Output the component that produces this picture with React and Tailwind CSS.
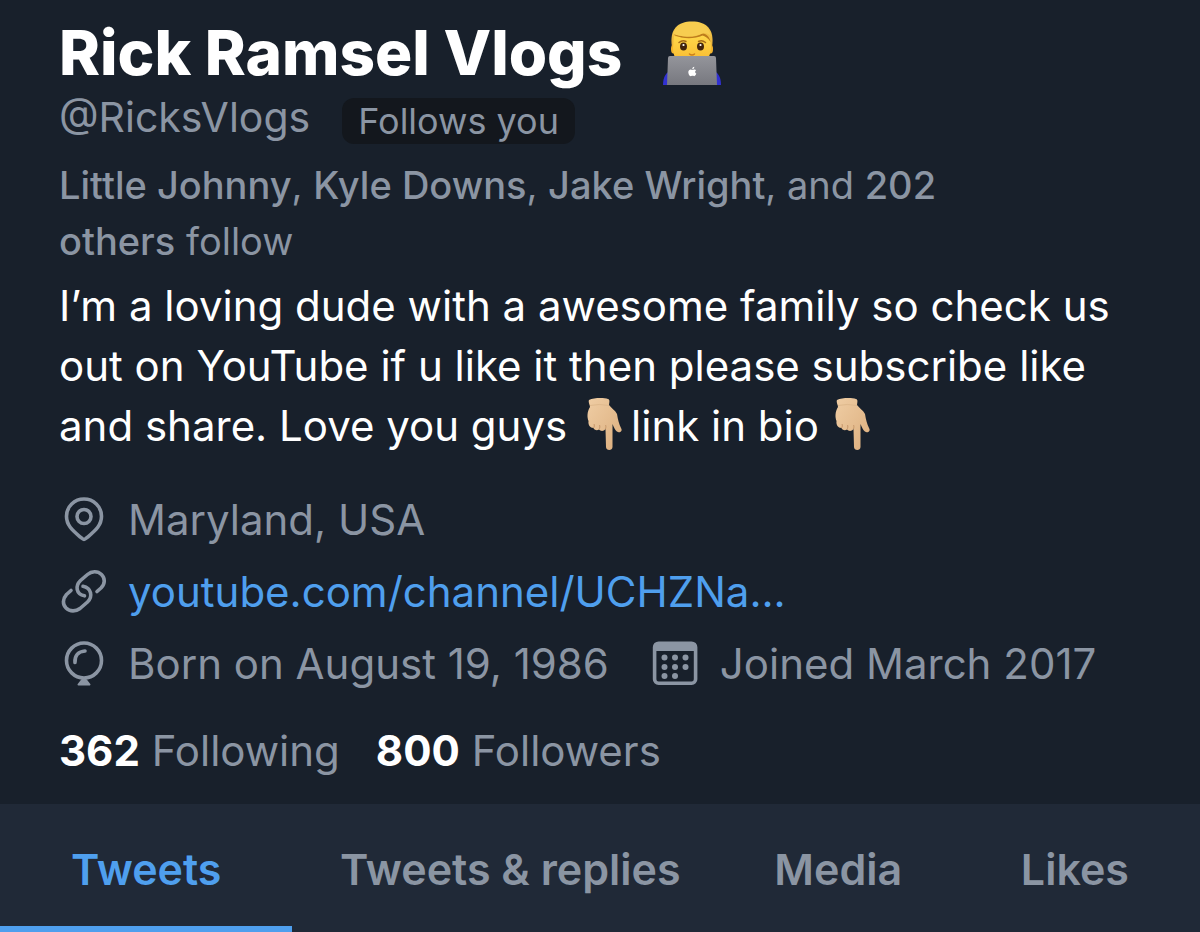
import clsx from 'clsx'

const followers = ['Little Johnny', 'Kyle Downs', 'Jake Wright']

const tabs = [
  { id: 'tweets', label: 'Tweets', edge: true },
  { id: 'replies', label: 'Tweets & replies', edge: false },
  { id: 'media', label: 'Media', edge: false },
  { id: 'likes', label: 'Likes', edge: true },
]

function Technologist() {
  return (
    <svg viewBox="0 0 58 66" className="h-[66px] w-[58px] shrink-0" role="img" aria-label="Man technologist">
      <defs>
        <linearGradient id="skin" x1="0" y1="0" x2="0" y2="1">
          <stop offset="0" stopColor="#ffd84a" />
          <stop offset="1" stopColor="#f7b52c" />
        </linearGradient>
        <linearGradient id="hair" x1="0" y1="0" x2="0" y2="1">
          <stop offset="0" stopColor="#f9d050" />
          <stop offset="1" stopColor="#e3a632" />
        </linearGradient>
        <linearGradient id="laptop" x1="0" y1="0" x2="0" y2="1">
          <stop offset="0" stopColor="#94959b" />
          <stop offset="1" stopColor="#77787f" />
        </linearGradient>
      </defs>
      <path d="M0 65C0 57 3 52 9 50H49C55 52 58 57 58 65Z" fill="#3131d2" />
      <path d="M9 27C6 9 15 1.500 29 1.500S52 9 49 27L47 34H11Z" fill="url(#hair)" />
      <ellipse cx="10.500" cy="29" rx="2.500" ry="4.500" fill="#f3b32d" />
      <ellipse cx="47.500" cy="29" rx="2.500" ry="4.500" fill="#f3b32d" />
      <path d="M11 16C20 18 35 19 40 15C46 14 48 19 48 27C48 37 42 47 29 47S10 38 10 28Z" fill="url(#skin)" />
      <path d="M10.500 13C17 17.500 32 18.500 39 13.500C43 13 47 17 47.500 22C45 18 42 16 39.500 15.500C30 19.500 19 18.500 12 15.500Z" fill="#bd7d1c" />
      <path d="M10 14C12.500 6 22 3 31 3.500C41 4 47 9 47.500 16C45 13 42 12.500 39.500 13.500C31 17.500 18 17 10 14Z" fill="#f7cd50" />
      <path d="M16 22.500Q19.500 19.500 23 21.500M35.500 21.500Q39 19.500 42.500 22.500" fill="none" stroke="#a56b19" strokeWidth="1.500" strokeLinecap="round" />
      <ellipse cx="20.500" cy="26.500" rx="3.500" ry="3.900" fill="#42240d" />
      <ellipse cx="37.500" cy="26.500" rx="3.500" ry="3.900" fill="#42240d" />
      <circle cx="20.500" cy="25" r="1.100" fill="#fff" />
      <circle cx="37.500" cy="25" r="1.100" fill="#fff" />
      <path d="M26.500 34Q29 36 31.500 34" fill="none" stroke="#cb7e1b" strokeWidth="1.500" strokeLinecap="round" />
      <path d="M7 36H51Q53 36 53 38L54 65H4L5 38Q5 36 7 36Z" fill="url(#laptop)" />
      <path d="M29.300 49.200C29.200 47.900 30.100 46.900 31.300 46.700C31.400 48 30.500 49.100 29.300 49.200ZM29.200 49.900C30 49.900 30.700 49.300 31.500 49.400C32.200 49.400 32.800 49.800 33.100 50.300C31.700 51.200 31.900 53 33.300 53.600C32.900 54.800 32.100 56.200 31.200 56.200C30.500 56.200 30.200 55.800 29.400 55.800C28.500 55.800 28.200 56.200 27.600 56.200C26.400 56.200 25.200 53.800 25.300 52.100C25.400 50.400 26.500 49.400 27.600 49.400C28.300 49.400 28.700 49.900 29.200 49.900Z" fill="#fff" />
    </svg>
  )
}

function PointDown() {
  return (
    <svg viewBox="0 0 36 54" className="h-[54px] w-9" role="img" aria-label="Pointing down">
      <defs>
        <linearGradient id="hand" x1="0" y1="0" x2="1" y2="1">
          <stop offset="0" stopColor="#efcda4" />
          <stop offset="1" stopColor="#dcae7d" />
        </linearGradient>
      </defs>
      <path
        d="M2 3C7 .500 17 .500 21 2C23 2.500 22.500 5 22 8C24 11 28 13 30 17C31 23 32 27 34 31C36 34 33 36 31 35C28 34 27 30 25.500 27V50C25.500 54 19 54 19 50L18.500 32C17 34.500 13.500 34.500 12 32.500C10 34 7 33 6.500 31C3 31 1 28 1.500 24C0 20 0 15 3 10C3 8 1 5 2 3Z"
        fill="url(#hand)"
      />
      <path d="M3 8.500Q12 6.500 22 8.500" fill="none" stroke="#dfb98d" strokeWidth="1" />
      <path d="M18.500 32C19 30 19 29 18.500 28M12 32.500C13 31 13 29 12.500 28M6.500 31C7.500 30 7.500 28 7 27" fill="none" stroke="#c6966a" strokeWidth="1" />
    </svg>
  )
}

function Icon({ children }) {
  return (
    <svg
      viewBox="0 0 48 48"
      className="size-12 shrink-0"
      fill="none"
      stroke="currentColor"
      strokeWidth="3.600"
      strokeLinecap="round"
      strokeLinejoin="round"
      aria-hidden="true"
    >
      {children}
    </svg>
  )
}

function Pin() {
  return (
    <Icon>
      <path d="M25 43.500C24 43.500 23 42.500 21 40.800C13 34 7.500 29 7.500 20.300C7.500 10.500 15.500 3 25 3S42.500 10.500 42.500 20.300C42.500 29 37 34 29 40.800C27 42.500 26 43.500 25 43.500Z" />
      <circle cx="25" cy="20.500" r="7" />
    </Icon>
  )
}

function Link() {
  return (
    <Icon>
      <path d="M38 23.500L42 20C46.500 15.500 46 10 42.500 6.500C38.500 2.500 32.500 3 28.500 6.500L21.500 12.500C16 18 17 26 25.500 27.800" />
      <path d="M12 22.500L7.500 26.500C3.500 31 3.500 36.500 7 40C11 44 17 43.500 21 40.500L28.500 34C34 28.500 32.500 20 24 18.300" />
    </Icon>
  )
}

function Balloon() {
  return (
    <Icon>
      <circle cx="25" cy="20.500" r="17.500" />
      <path d="M16 22.500C15.500 15.500 19.500 11.500 26 11" />
      <path d="M23 40H27L30.500 44.500H19.500Z" fill="currentColor" strokeWidth="2" />
    </Icon>
  )
}

function Calendar() {
  return (
    <Icon>
      <rect x="3.600" y="3.200" width="41" height="40" rx="4" />
      <path d="M4 5H44V10H4Z" fill="currentColor" strokeWidth="2" />
      <g fill="currentColor" stroke="none">
        <circle cx="13.500" cy="17.500" r="3" />
        <circle cx="24" cy="17.500" r="3" />
        <circle cx="34.500" cy="17.500" r="3" />
        <circle cx="13.500" cy="27" r="3" />
        <circle cx="24" cy="27" r="3" />
        <circle cx="34.500" cy="27" r="3" />
        <circle cx="13.500" cy="36" r="3" />
        <circle cx="24" cy="36" r="3" />
      </g>
    </Icon>
  )
}

export default function App() {
  return (
    <main className="min-h-screen bg-[#18202b] font-['Inter',sans-serif] text-[#8b95a3]">
      <section className="px-[59px] pt-5">
        {/* Name and handle */}
        <div className="flex items-center gap-[41px]">
          <h1 className="text-[62px] leading-[66px] font-extrabold text-white">Rick Ramsel Vlogs</h1>
          <Technologist />
        </div>
        <div className="mt-3 flex items-start gap-8">
          <span className="text-[41px] leading-[38px]">@RicksVlogs</span>
          <span className="rounded-xl bg-[#13171d] px-4 text-[36px] leading-[46px]">Follows you</span>
        </div>

        <p className="mt-[13px] text-[38px] leading-[56px]">
          {followers.map((name) => (
            <span key={name}>
              <b className="font-medium">{name}</b>,{' '}
            </span>
          ))}
          and <b className="font-medium">202<br />others</b> follow
        </p>

        <p className="mt-[7px] text-[42px] leading-[60px] text-white">
          I’m a loving dude with a awesome family so check us<br />
          out on YouTube if u like it then please subscribe like<br />
          and share. Love you guys <span className="inline-flex h-14 items-center px-2 align-top"><PointDown /></span>
          link in bio <span className="inline-flex h-14 items-center pl-1 align-top"><PointDown /></span>
        </p>

        {/* Location, link, dates */}
        <ul className="mt-7 text-[42px] leading-[72px]">
          <li className="flex items-center gap-[21px]">
            <Pin />
            Maryland, USA
          </li>
          <li className="flex items-center gap-[21px]">
            <Link />
            <a href="#channel" className="text-[#4f9fee]">youtube.com/channel/UCHZNa...</a>
          </li>
          <li className="flex items-center gap-[42px]">
            <span className="flex items-center gap-[21px]">
              <Balloon />
              Born on August 19, 1986
            </span>
            <span className="flex items-center gap-[21px]">
              <Calendar />
              Joined March 2017
            </span>
          </li>
        </ul>

        <div className="flex gap-9 pt-4 pb-[18px] text-[42px] leading-[70px]">
          <a href="#following"><b className="text-white">362</b> Following</a>
          <a href="#followers"><b className="text-white">800</b> Followers</a>
        </div>
      </section>

      <nav className="flex justify-between bg-[#202937]">
        {tabs.map((tab) => (
          <button
            key={tab.id}
            type="button"
            className={clsx(
              'border-b-[6px] pt-2 text-[43px] leading-[114px] font-semibold whitespace-nowrap',
              tab.edge ? 'px-[71px]' : 'px-[46px]',
              tab.id === 'tweets' ? 'border-[#4f9fee] text-[#4f9fee]' : 'border-transparent',
            )}
          >
            {tab.label}
          </button>
        ))}
      </nav>
    </main>
  )
}
